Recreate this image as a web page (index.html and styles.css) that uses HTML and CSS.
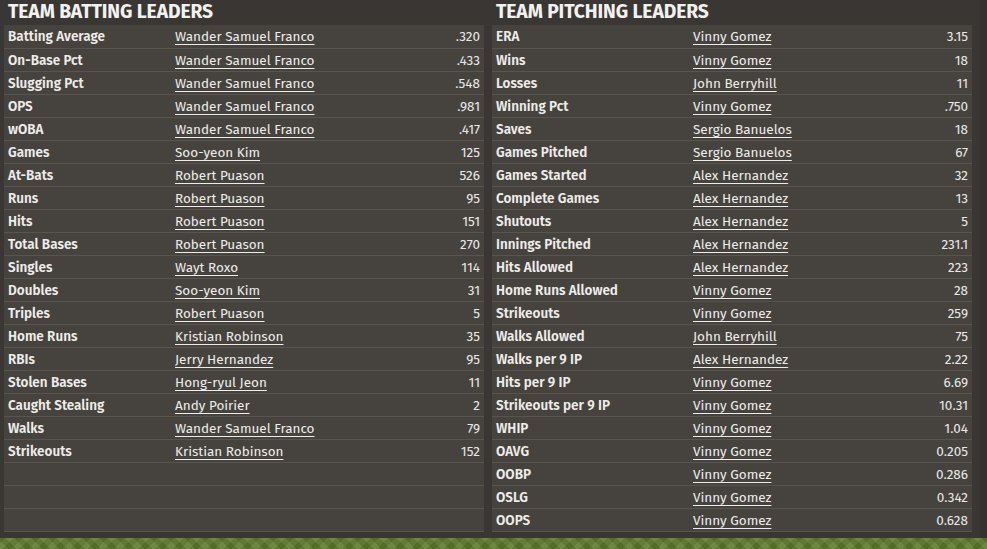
FILE: index.html
```html
<!DOCTYPE html>
<html>
<head>
<meta charset="utf-8">
<link rel="stylesheet" href="styles.css">
</head>
<body>
<div class="page">
  <div class="boards">
    <section class="panel">
      <h2 class="title">TEAM BATTING LEADERS</h2>
      <table class="leaders bat">
        <colgroup><col class="c-label"><col class="c-name"><col class="c-val"></colgroup>
        <tr><th>Batting Average</th><td><a href="#">Wander Samuel Franco</a></td><td class="v">.320</td></tr>
        <tr><th>On-Base Pct</th><td><a href="#">Wander Samuel Franco</a></td><td class="v">.433</td></tr>
        <tr><th>Slugging Pct</th><td><a href="#">Wander Samuel Franco</a></td><td class="v">.548</td></tr>
        <tr><th>OPS</th><td><a href="#">Wander Samuel Franco</a></td><td class="v">.981</td></tr>
        <tr><th>wOBA</th><td><a href="#">Wander Samuel Franco</a></td><td class="v">.417</td></tr>
        <tr><th>Games</th><td><a href="#">Soo-yeon Kim</a></td><td class="v">125</td></tr>
        <tr><th>At-Bats</th><td><a href="#">Robert Puason</a></td><td class="v">526</td></tr>
        <tr><th>Runs</th><td><a href="#">Robert Puason</a></td><td class="v">95</td></tr>
        <tr><th>Hits</th><td><a href="#">Robert Puason</a></td><td class="v">151</td></tr>
        <tr><th>Total Bases</th><td><a href="#">Robert Puason</a></td><td class="v">270</td></tr>
        <tr><th>Singles</th><td><a href="#">Wayt Roxo</a></td><td class="v">114</td></tr>
        <tr><th>Doubles</th><td><a href="#">Soo-yeon Kim</a></td><td class="v">31</td></tr>
        <tr><th>Triples</th><td><a href="#">Robert Puason</a></td><td class="v">5</td></tr>
        <tr><th>Home Runs</th><td><a href="#">Kristian Robinson</a></td><td class="v">35</td></tr>
        <tr><th>RBIs</th><td><a href="#">Jerry Hernandez</a></td><td class="v">95</td></tr>
        <tr><th>Stolen Bases</th><td><a href="#">Hong-ryul Jeon</a></td><td class="v">11</td></tr>
        <tr><th>Caught Stealing</th><td><a href="#">Andy Poirier</a></td><td class="v">2</td></tr>
        <tr><th>Walks</th><td><a href="#">Wander Samuel Franco</a></td><td class="v">79</td></tr>
        <tr><th>Strikeouts</th><td><a href="#">Kristian Robinson</a></td><td class="v">152</td></tr>
        <tr><th></th><td></td><td class="v"></td></tr>
        <tr><th></th><td></td><td class="v"></td></tr>
        <tr><th></th><td></td><td class="v"></td></tr>
      </table>
    </section>
    <section class="panel">
      <h2 class="title">TEAM PITCHING LEADERS</h2>
      <table class="leaders pit">
        <colgroup><col class="c-label"><col class="c-name"><col class="c-val"></colgroup>
        <tr><th>ERA</th><td><a href="#">Vinny Gomez</a></td><td class="v">3.15</td></tr>
        <tr><th>Wins</th><td><a href="#">Vinny Gomez</a></td><td class="v">18</td></tr>
        <tr><th>Losses</th><td><a href="#">John Berryhill</a></td><td class="v">11</td></tr>
        <tr><th>Winning Pct</th><td><a href="#">Vinny Gomez</a></td><td class="v">.750</td></tr>
        <tr><th>Saves</th><td><a href="#">Sergio Banuelos</a></td><td class="v">18</td></tr>
        <tr><th>Games Pitched</th><td><a href="#">Sergio Banuelos</a></td><td class="v">67</td></tr>
        <tr><th>Games Started</th><td><a href="#">Alex Hernandez</a></td><td class="v">32</td></tr>
        <tr><th>Complete Games</th><td><a href="#">Alex Hernandez</a></td><td class="v">13</td></tr>
        <tr><th>Shutouts</th><td><a href="#">Alex Hernandez</a></td><td class="v">5</td></tr>
        <tr><th>Innings Pitched</th><td><a href="#">Alex Hernandez</a></td><td class="v">231.1</td></tr>
        <tr><th>Hits Allowed</th><td><a href="#">Alex Hernandez</a></td><td class="v">223</td></tr>
        <tr><th>Home Runs Allowed</th><td><a href="#">Vinny Gomez</a></td><td class="v">28</td></tr>
        <tr><th>Strikeouts</th><td><a href="#">Vinny Gomez</a></td><td class="v">259</td></tr>
        <tr><th>Walks Allowed</th><td><a href="#">John Berryhill</a></td><td class="v">75</td></tr>
        <tr><th>Walks per 9 IP</th><td><a href="#">Alex Hernandez</a></td><td class="v">2.22</td></tr>
        <tr><th>Hits per 9 IP</th><td><a href="#">Vinny Gomez</a></td><td class="v">6.69</td></tr>
        <tr><th>Strikeouts per 9 IP</th><td><a href="#">Vinny Gomez</a></td><td class="v">10.31</td></tr>
        <tr><th>WHIP</th><td><a href="#">Vinny Gomez</a></td><td class="v">1.04</td></tr>
        <tr><th>OAVG</th><td><a href="#">Vinny Gomez</a></td><td class="v">0.205</td></tr>
        <tr><th>OOBP</th><td><a href="#">Vinny Gomez</a></td><td class="v">0.286</td></tr>
        <tr><th>OSLG</th><td><a href="#">Vinny Gomez</a></td><td class="v">0.342</td></tr>
        <tr><th>OOPS</th><td><a href="#">Vinny Gomez</a></td><td class="v">0.628</td></tr>
      </table>
    </section>
  </div>
  <div class="grass"></div>
</div>
</body>
</html>
```

FILE: styles.css
```css
html, body {
  margin: 0;
  padding: 0;
}
body {
  background: #34312e;
  font-family: "Fira Sans", "Open Sans", "Noto Sans", sans-serif;
  color: #ebe9e6;
  width: 987px;
  height: 549px;
  overflow: hidden;
}
.page {
  display: flex;
  flex-direction: column;
  height: 549px;
}
.boards {
  display: flex;
  gap: 8px;
  width: 980px;
  box-sizing: border-box;
  padding: 0 8px 6px 4px;
  background: #393633;
  height: 538px;
}
.panel {
  display: flex;
  flex-direction: column;
  width: 480px;
}
.title {
  margin: 0;
  height: 25px;
  padding-left: 4px;
  font-size: 19.3px;
  font-weight: 700;
  line-height: 24px;
  color: #f2f1ef;
  letter-spacing: -0.1px;
  white-space: nowrap;
}
.leaders {
  width: 480px;
  border-collapse: collapse;
  table-layout: fixed;
  background: #46433f;
  font-size: 13.5px;
}
.leaders tr {
  height: 23px;
  border-bottom: 1px solid #58544f;
}
.leaders th,
.leaders td {
  padding: 2px 4px 0;
  height: 20px;
  line-height: 20px;
  white-space: nowrap;
  text-align: left;
}
.leaders th {
  font-weight: 600;
  color: #eeece9;
}
.leaders td:nth-child(2) {
  padding-left: 0;
}
.leaders td.v {
  text-align: right;
}
.leaders a {
  color: #eeece9;
  text-decoration: underline;
  text-underline-offset: 3px;
  text-decoration-thickness: 1px;
}
.bat .c-label { width: 171px; }
.bat .c-name { width: 230px; }
.pit .c-label { width: 201px; }
.pit .c-name { width: 200px; }
.grass {
  flex: 1;
  background-color: #5d7a2c;
  background-image:
    repeating-linear-gradient(45deg, rgba(255,255,255,0.06) 0 6px, rgba(0,0,0,0.06) 6px 12px),
    repeating-linear-gradient(-45deg, rgba(255,255,255,0.05) 0 6px, rgba(0,0,0,0.05) 6px 12px);
}
```
